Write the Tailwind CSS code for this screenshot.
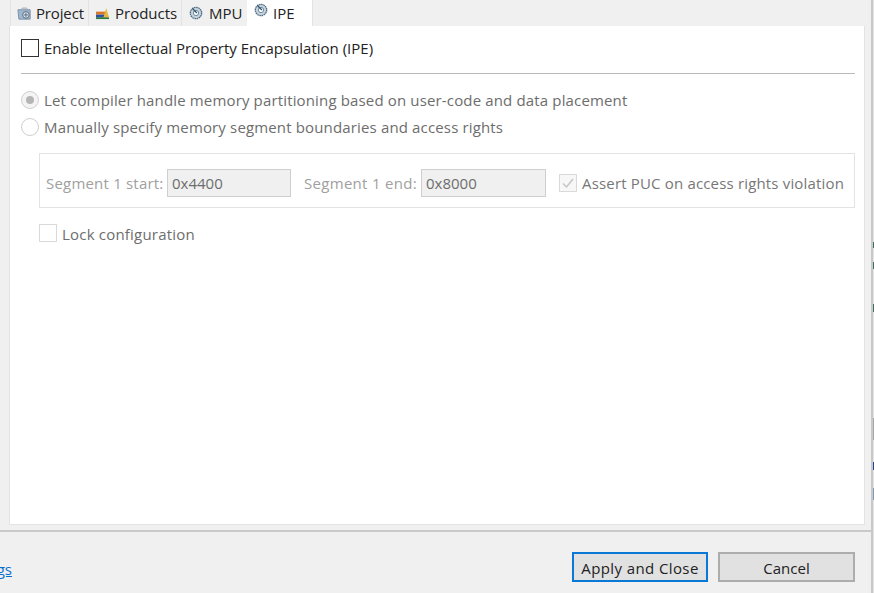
<!DOCTYPE html>
<html lang="en">
<head>
  <meta charset="UTF-8" />
  <title>IPE Properties</title>
  <script src="https://cdn.jsdelivr.net/npm/@tailwindcss/browser@4"></script>
</head>
<body class="w-[874px] h-[593px] overflow-hidden bg-[#f0f0f0] font-['Open_Sans','Noto_Sans',sans-serif] text-[15px] text-[#3a3a3a] flex">

  <!-- Dialog -->
  <div class="w-[871px] h-full flex flex-col shrink-0">
    <!-- Tabs -->
    <div class="h-[26px] pl-[10px] flex shrink-0">
      <div class="w-[79px] h-[26px] flex items-center pl-[6px] gap-[4px] border-l border-r border-[#e3e3e3]">
        <svg width="15" height="15" viewBox="0 0 16 16"><path d="M4 3l2-1.500h4L12 3z" fill="#a9b4bf"/><path d="M1 4h13v10H2z" fill="#9db8d2" stroke="#7b8ea2"/><circle cx="9.500" cy="9.500" r="3.500" fill="#dfe8f0" stroke="#56677a"/><path d="M7 9.500h5M9.500 7v5" stroke="#56677a"/></svg>
        <span class="text-[#222] tracking-[-0.15px]">Project</span>
      </div>
      <div class="w-[93px] h-[26px] flex items-center pl-[6px] gap-[5px] border-r border-[#e3e3e3]">
        <svg width="15" height="13" viewBox="0 0 16 14"><path d="M1 11h14v2H1z" fill="#2f7a3a"/><path d="M1 8h12v3H1z" fill="#2e4f9e"/><path d="M1 5h10v3H1z" fill="#d9752a"/><path d="M9 11l3-10 3 10z" fill="#e5b93c"/></svg>
        <span class="text-[#222]">Products</span>
      </div>
      <div class="w-[65px] h-[26px] flex items-center pl-[7px] gap-[6px]">
        <svg width="14" height="14" viewBox="0 0 16 16"><circle cx="8" cy="8" r="6.500" fill="#c4d2dd" stroke="#4d6a80" stroke-width="1.500" stroke-dasharray="1.800 0.700"/><circle cx="8" cy="8" r="3" fill="#fff" stroke="#5f7d92"/><path d="M4 3l5 5" stroke="#33536a" stroke-width="1.500"/></svg>
        <span class="text-[#222]">MPU</span>
      </div>
      <div class="w-[66px] h-[26px] flex items-start pt-[2px] pl-[7px] gap-[5px] bg-white border-r border-[#e3e3e3]">
        <svg class="mt-[1px]" width="14" height="14" viewBox="0 0 16 16"><circle cx="8" cy="8" r="6.500" fill="#c4d2dd" stroke="#4d6a80" stroke-width="1.500" stroke-dasharray="1.800 0.700"/><circle cx="8" cy="8" r="3" fill="#fff" stroke="#5f7d92"/><path d="M4 3l5 5" stroke="#33536a" stroke-width="1.500"/></svg>
        <span class="text-[#222]">IPE</span>
      </div>
    </div>

    <!-- Panel -->
    <div class="ml-[9px] w-[856px] h-[499px] shrink-0 bg-white border border-t-0 border-[#e3e3e3] pl-[11px] pr-[9px] flex flex-col">
      <label class="mt-[13px] h-[18px] flex items-center gap-[5px] text-[#222]">
        <span class="w-[18px] h-[18px] border border-[#333] bg-white shrink-0"></span>
        <span>Enable Intellectual Property Encapsulation (IPE)</span>
      </label>
      <div class="mt-[16px] h-[1px] bg-[#b9b9b9] shrink-0"></div>

      <label class="mt-[17px] h-[18px] flex items-center gap-[5px] text-[#6d6d6d]">
        <span class="w-[18px] h-[18px] rounded-full border border-[#cfcfcf] bg-[#f4f4f4] shrink-0 flex items-center justify-center"><span class="w-[8px] h-[8px] rounded-full bg-[#b5b5b5]"></span></span>
        <span class="tracking-[0.15px]">Let compiler handle memory partitioning based on user-code and data placement</span>
      </label>
      <label class="mt-[9px] h-[18px] flex items-center gap-[5px] text-[#6d6d6d]">
        <span class="w-[18px] h-[18px] rounded-full border border-[#cfcfcf] bg-white shrink-0"></span>
        <span class="tracking-[0.15px]">Manually specify memory segment boundaries and access rights</span>
      </label>

      <div class="mt-[17px] ml-[18px] h-[55px] border border-[#e3e3e3] flex items-center pt-[4px] pl-[6px] text-[#a0a0a0] shrink-0">
        <span class="mt-[2px] w-[117px] whitespace-nowrap tracking-[0.2px]">Segment 1 start:</span>
        <span class="ml-[4px] w-[124px] h-[28px] border border-[#cfcfcf] bg-[#f0f0f0] text-[#6d6d6d] flex items-center pl-[4px] pt-[1px]">0x4400</span>
        <span class="mt-[2px] ml-[13px] w-[113px] whitespace-nowrap tracking-[0.3px]">Segment 1 end:</span>
        <span class="ml-[4px] w-[125px] h-[28px] border border-[#cfcfcf] bg-[#f0f0f0] text-[#6d6d6d] flex items-center pl-[4px] pt-[1px]">0x8000</span>
        <span class="ml-[13px] w-[18px] h-[18px] border border-[#d9d9d9] bg-[#f7f7f7] shrink-0 flex items-center justify-center">
          <svg width="14" height="14" viewBox="0 0 14 14"><path d="M2 7.500l3.500 3.500L12 3" fill="none" stroke="#c4c4c4" stroke-width="1.400"/></svg>
        </span>
        <span class="mt-[2px] ml-[5px] whitespace-nowrap text-[#777] tracking-[0.17px]">Assert PUC on access rights violation</span>
      </div>

      <label class="mt-[16px] ml-[18px] h-[18px] flex items-center gap-[5px] text-[#6d6d6d]">
        <span class="w-[18px] h-[18px] border border-[#d9d9d9] bg-white shrink-0"></span>
        <span class="mt-[2px] tracking-[0.2px]">Lock configuration</span>
      </label>
    </div>

    <!-- Footer -->
    <div class="mt-[5px] flex-1 border-t-2 border-[#c9c9c9] flex items-start">
      <div class="mt-[26px] w-[12px] h-[22px] overflow-hidden flex justify-end shrink-0">
        <a class="text-[#0a6ed1] underline whitespace-nowrap">settings</a>
      </div>
      <button class="ml-[560px] mt-[20px] w-[136px] h-[30px] pt-[2px] bg-[#e1e1e1] border-2 border-[#0a78d7] text-[#222] tracking-[0.4px] flex items-center justify-center">Apply and Close</button>
      <button class="ml-[10px] mt-[20px] w-[137px] h-[30px] pt-[2px] bg-[#e1e1e1] border-2 border-[#adadad] text-[#222] flex items-center justify-center">Cancel</button>
    </div>
  </div>

  <!-- Edge of the window behind -->
  <div class="relative w-[3px] h-full border-l-2 border-[#c8c8c8] bg-[#e4e4e4]">
    <div class="absolute left-0 top-[242px] w-[1px] h-[6px] bg-[#3f6f5f]"></div>
    <div class="absolute left-0 top-[262px] w-[1px] h-[7px] bg-[#3f6f5f]"></div>
    <div class="absolute left-0 top-[304px] w-[1px] h-[8px] bg-[#3f6f5f]"></div>
    <div class="absolute left-0 top-[418px] w-[1px] h-[22px] bg-[#a6a6a6]"></div>
    <div class="absolute left-0 top-[462px] w-[1px] h-[8px] bg-[#24408e]"></div>
    <div class="absolute left-0 top-[488px] w-[1px] h-[12px] bg-[#7f9ab5]"></div>
  </div>
</body>
</html>
